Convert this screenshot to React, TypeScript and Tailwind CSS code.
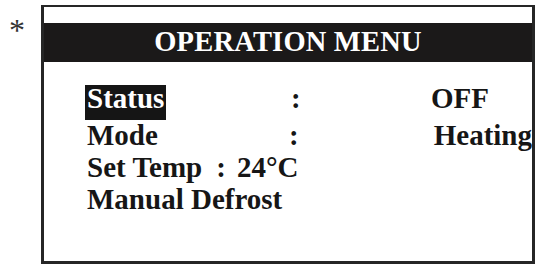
const FONT = { fontFamily: '"Liberation Serif", "Times New Roman", serif' };

type Row = { label: string; value: string; highlight?: boolean; valueIndent?: string };

const ROWS: Row[] = [
  { label: "Status", value: "OFF", highlight: true, valueIndent: "pl-[1px]" },
  { label: "Mode", value: "Heating", valueIndent: "pl-[7px]" },
];

export default function App() {
  return (
    <div className="w-[537px] h-[265px] bg-white flex pt-[5px] text-[#161616] overflow-hidden" style={FONT}>
      <span className="block w-[41px] pl-[9px] mt-[9px] text-[32px] leading-[32px] text-[#333]">*</span>

      <div className="w-[494px] h-[259px] border-[3px] border-t-2 border-[#262626] flex flex-col">
        <div className="mt-[16px] h-[39px] bg-[#1b1919] flex items-center justify-center">
          <span className="text-white font-bold text-[28.5px] leading-none tracking-[0.2px]">OPERATION MENU</span>
        </div>

        <div className="flex flex-col pl-[41px] pt-[20px] font-bold text-[29px] leading-[32px]">
          {ROWS.map((row) => (
            <div key={row.label} className={`flex items-start ${row.highlight ? "h-[37px] pt-[3px]" : "h-[32px]"}`}>
              <div className="w-[206px] flex">
                <span
                  className={
                    row.highlight
                      ? "block h-[35px] leading-[26px] bg-[#151515] text-white px-[2px]"
                      : "block pl-[2px]"
                  }
                >
                  {row.label}
                </span>
              </div>
              <span className={`block w-[139px] ${row.highlight ? "leading-[26px]" : ""}`}>:</span>
              <span
                className={`relative block whitespace-nowrap ${row.valueIndent ?? ""} ${row.highlight ? "leading-[26px]" : ""}`}
              >
                {row.value}
              </span>
            </div>
          ))}

          <div className="h-[32px] pl-[2px] whitespace-nowrap">
            Set Temp<span className="ml-[14px]">:</span>
            <span className="ml-[11px]">24°C</span>
          </div>
          <div className="h-[32px] pl-[2px] whitespace-nowrap">Manual Defrost</div>
        </div>
      </div>
    </div>
  );
}
